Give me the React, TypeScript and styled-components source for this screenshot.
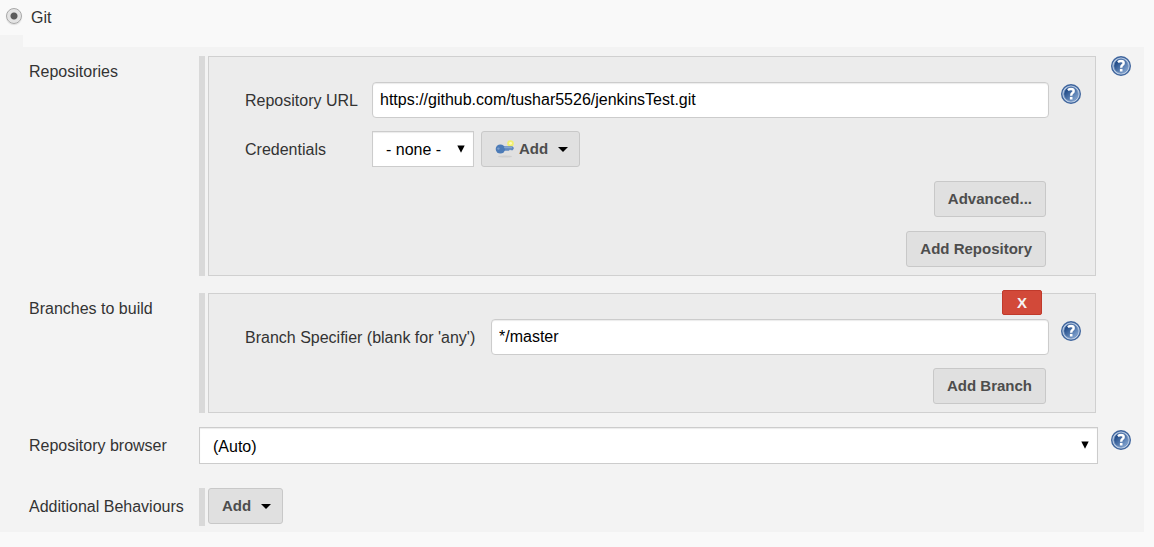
import React from "react";
import styled, { createGlobalStyle } from "styled-components";

const GlobalStyle = createGlobalStyle`
  *, *::before, *::after { box-sizing: border-box; }
  body {
    margin: 0;
    background: #f9f9f9;
    color: #333;
    font: 16px/20px "Liberation Sans", Arial, sans-serif;
  }
`;

const Page = styled.main`
  padding-right: 10px;
`;

const SourceOption = styled.label`
  display: flex;
  align-items: flex-start;
  gap: 9px;
  height: 35px;
  padding: 8px 0 0 6px;
`;

const Radio = styled.input`
  appearance: none;
  width: 16px;
  height: 16px;
  margin: 0;
  border: 1px solid #a8a8a8;
  border-radius: 50%;
  background: radial-gradient(circle, #5c5c5c 3px, #e4e4e4 4px);
  box-shadow: 0 1px 1px #ddd;
`;

const Indent = styled.div`
  width: 23px;
  height: 12px;
  background: #f3f3f3;
`;

const Panel = styled.section`
  padding: 9px 0 6px;
  background: #f3f3f3;
`;

const SettingRow = styled.div<{ $gap?: number; $labelTop?: number; $helpTop?: number }>`
  display: grid;
  grid-template-columns: 170px minmax(0, 1fr) 46px;
  margin-bottom: ${(p) => p.$gap ?? 0}px;
  padding-left: 29px;

  & > :first-child { padding-top: ${(p) => p.$labelTop ?? 6}px; }
  & > :nth-child(3) { margin: ${(p) => p.$helpTop ?? 0}px 0 0 13px; }
`;

const SettingTitle = styled.span``;
const SettingLabel = styled.label``;

const Chunk = styled.div<{ $bottom?: number }>`
  margin-right: 2px;
  padding: 0 0 ${(p) => p.$bottom ?? 0}px 3px;
  border-left: 6px solid #d9d9d9;
`;

const Box = styled.div`
  position: relative;
  padding: 25px 14px 8px 36px;
  border: 1px solid #d0d0d0;
  background: #ececec;
`;

const Fields = styled.div`
  display: flex;
  flex-direction: column;
  gap: 13px;
`;

const Field = styled.div<{ $labelWidth: number }>`
  display: grid;
  grid-template-columns: ${(p) => p.$labelWidth}px minmax(0, 1fr) 20px;

  & > label { padding-top: 9px; }
  & > :nth-child(3) { margin-top: 2px; }
`;

const FieldControls = styled.div`
  display: flex;
  gap: 7px;
`;

const TextInput = styled.input`
  width: calc(100% - 12px);
  height: 36px;
  padding: 0 7px 1px;
  border: 1px solid #ccc;
  border-radius: 4px;
  background: #fff;
  box-shadow: inset 0 1px 1px #ececec;
  color: #000;
  font: inherit;
`;

const SelectWrap = styled.div<{ $width?: string }>`
  position: relative;
  width: ${(p) => p.$width ?? "100%"};

  & > svg {
    position: absolute;
    top: 14px;
    right: 9px;
    pointer-events: none;
  }
`;

const Select = styled.select<{ $height: number }>`
  appearance: none;
  display: block;
  width: 100%;
  height: ${(p) => p.$height}px;
  padding: 2px 24px 0 13px;
  border: 1px solid #ccc;
  border-radius: 0;
  background: #fff;
  box-shadow: inset 0 1px 1px #ececec;
  color: #000;
  font: inherit;
`;

const Button = styled.button`
  display: flex;
  align-items: center;
  height: 36px;
  padding: 0 13px;
  border: 1px solid #c8c8c8;
  border-radius: 3px;
  background: #e0e0e0;
  color: #4d4d4d;
  font: bold 15px/20px "Liberation Sans", Arial, sans-serif;
`;

const MenuButton = styled(Button)`
  padding-right: 11px;
`;

const ButtonStack = styled.div<{ $top: number }>`
  display: flex;
  flex-direction: column;
  align-items: flex-end;
  gap: 14px;
  padding: ${(p) => p.$top}px 35px 0 0;
`;

const DeleteButton = styled.button`
  position: absolute;
  top: -4px;
  right: 53px;
  width: 40px;
  height: 25px;
  padding: 0;
  border: 1px solid #c03a2b;
  border-radius: 2px;
  background: #d24939;
  color: #f4f4f4;
  font: bold 15px/20px "Liberation Sans", Arial, sans-serif;
`;

const HelpButton = styled.button`
  display: block;
  width: 20px;
  height: 20px;
  padding: 0;
  border: 0;
  background: none;

  & > svg { display: block; }
`;

const CaretIcon = styled.svg`
  margin-left: 10px;
`;

const KeySvg = styled.svg`
  margin-right: 4px;
`;

function Help({ about }: { about: string }) {
  return (
    <HelpButton type="button" aria-label={`Help for ${about}`}>
      <svg width="20" height="20" viewBox="0 0 20 20">
        <defs>
          <linearGradient id="helpFill" x1="0" y1="0" x2="1" y2="1">
            <stop offset="0.2" stopColor="#204a87" />
            <stop offset="0.9" stopColor="#84a6d2" />
          </linearGradient>
        </defs>
        <circle cx="10" cy="10" r="9.3" fill="#c3d3e8" stroke="#3f659d" strokeWidth="1.4" />
        <circle cx="10" cy="10" r="7.2" fill="url(#helpFill)" stroke="#6f8fbe" strokeWidth="0.8" />
        <path d="M6.9 6.1Q8.2 5 10 5Q12.7 5 12.7 7Q12.7 8.2 11.4 9.1Q10.2 9.9 10.2 11.8" fill="none" stroke="#fff" strokeWidth="2.4" />
        <rect x="8.9" y="12.9" width="2.6" height="2.6" fill="#fff" />
      </svg>
    </HelpButton>
  );
}

function Caret() {
  return (
    <CaretIcon width="10" height="5" viewBox="0 0 10 5" aria-hidden="true">
      <path d="M0 0H10L5 5Z" fill="#000" />
    </CaretIcon>
  );
}

function SelectArrow() {
  return (
    <svg width="8" height="8" viewBox="0 0 8 8" aria-hidden="true">
      <path d="M0.3 0.5H7.7L4 7.8Z" fill="#000" />
    </svg>
  );
}

function KeyIcon() {
  return (
    <KeySvg width="20" height="18" viewBox="0 0 20 18" aria-hidden="true">
      <ellipse cx="10" cy="16.5" rx="7" ry="1.1" fill="#cfcfcf" />
      <circle cx="15.5" cy="3.5" r="3.3" fill="#f1ef70" />
      <path d="M8 6.2H17.4L19 8L17.8 10.2H15.8L15 9.6L14 10.8H8.5Z" fill="#6089bf" />
      <ellipse cx="5.4" cy="9" rx="4.7" ry="4.6" fill="#4c7bb7" />
      <circle cx="3.4" cy="8.6" r="1.2" fill="#7b9dcb" />
      <path d="M9 7.7H17" stroke="#9cb6d8" strokeWidth="0.8" />
      <circle cx="15.6" cy="3.3" r="1.4" fill="#fffbb8" />
    </KeySvg>
  );
}

export default function App() {
  return (
    <>
      <GlobalStyle />
      <Page>
        <SourceOption>
          <Radio type="radio" name="scm" defaultChecked />
          Git
        </SourceOption>
        <Indent />
        <Panel>
          <SettingRow $gap={17}>
            <SettingTitle>Repositories</SettingTitle>
            <Chunk>
              <Box>
                <Fields>
                  <Field $labelWidth={127}>
                    <label htmlFor="url">Repository URL</label>
                    <TextInput id="url" type="text" defaultValue="https://github.com/tushar5526/jenkinsTest.git" />
                    <Help about="Repository URL" />
                  </Field>
                  <Field $labelWidth={127}>
                    <label htmlFor="credentials">Credentials</label>
                    <FieldControls>
                      <SelectWrap $width="102px">
                        <Select id="credentials" $height={36}>
                          <option>- none -</option>
                        </Select>
                        <SelectArrow />
                      </SelectWrap>
                      <MenuButton type="button">
                        <KeyIcon />
                        Add
                        <Caret />
                      </MenuButton>
                    </FieldControls>
                  </Field>
                </Fields>
                <ButtonStack $top={14}>
                  <Button type="button">Advanced...</Button>
                  <Button type="button">Add Repository</Button>
                </ButtonStack>
              </Box>
            </Chunk>
            <Help about="Repositories" />
          </SettingRow>

          <SettingRow $gap={14}>
            <SettingTitle>Branches to build</SettingTitle>
            <Chunk>
              <Box>
                <DeleteButton type="button" aria-label="Delete branch">X</DeleteButton>
                <Fields>
                  <Field $labelWidth={246}>
                    <label htmlFor="branch">Branch Specifier (blank for 'any')</label>
                    <TextInput id="branch" type="text" defaultValue="*/master" />
                    <Help about="Branch Specifier" />
                  </Field>
                </Fields>
                <ButtonStack $top={13}>
                  <Button type="button">Add Branch</Button>
                </ButtonStack>
              </Box>
            </Chunk>
          </SettingRow>

          <SettingRow $gap={24} $labelTop={9} $helpTop={3}>
            <SettingLabel htmlFor="browser">Repository browser</SettingLabel>
            <SelectWrap>
              <Select id="browser" $height={37}>
                <option>(Auto)</option>
              </Select>
              <SelectArrow />
            </SelectWrap>
            <Help about="Repository browser" />
          </SettingRow>

          <SettingRow $labelTop={9}>
            <SettingTitle>Additional Behaviours</SettingTitle>
            <Chunk $bottom={2}>
              <FieldControls>
                <MenuButton type="button">
                  Add
                  <Caret />
                </MenuButton>
              </FieldControls>
            </Chunk>
          </SettingRow>
        </Panel>
      </Page>
    </>
  );
}
